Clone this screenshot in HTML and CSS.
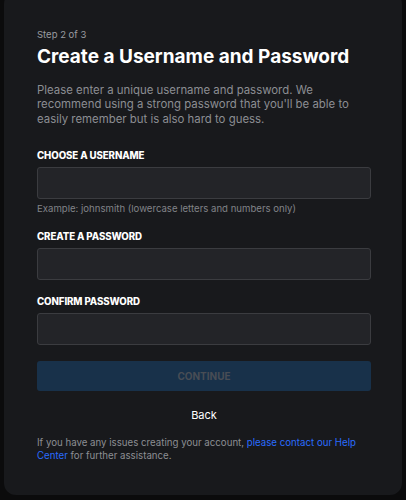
FILE: index.html
```html
<!DOCTYPE html>
<html>
<head>
<meta charset="utf-8">
<link rel="stylesheet" href="styles.css">
</head>
<body>
<div class="card">
  <div class="step">Step 2 of 3</div>
  <h1 class="title">Create a Username and Password</h1>
  <p class="intro">Please enter a unique username and password. We recommend using a strong password that you'll be able to easily remember but is also hard to guess.</p>
  <div class="field first">
    <label class="label">CHOOSE A USERNAME</label>
    <div class="input"></div>
    <div class="hint">Example: johnsmith (lowercase letters and numbers only)</div>
  </div>
  <div class="field">
    <label class="label">CREATE A PASSWORD</label>
    <div class="input"></div>
  </div>
  <div class="field">
    <label class="label">CONFIRM PASSWORD</label>
    <div class="input"></div>
  </div>
  <div class="button">CONTINUE</div>
  <div class="back">Back</div>
  <p class="footer">If you have any issues creating your account, <span class="link">please contact our Help Center</span> for further assistance.</p>
</div>
</body>
</html>
```
FILE: styles.css
```css
html, body {
  margin: 0;
  padding: 0;
  background: #0b0b0c;
}
body {
  font-family: Inter, "Noto Sans", sans-serif;
  padding: 0 4px 5px 4px;
}
.card {
  background: #18191c;
  border-radius: 12px;
  margin-top: -8px;
  padding: 36px 31px 30px 33px;
  height: 503px;
  box-sizing: border-box;
}
.step {
  color: #9a9ca0;
  font-size: 9.5px;
  line-height: 14px;
}
.title {
  color: #ffffff;
  font-size: 19px;
  font-weight: 700;
  line-height: 26px;
  margin: 2px 0 0 0;
}
.intro {
  color: #8c8e93;
  font-size: 11.4px;
  line-height: 14.5px;
  margin: 12.75px 0 0 0;
  max-width: 318px;
}
.field {
  margin-top: 16px;
}
.field.first {
  margin-top: 23.75px;
}
.label {
  display: block;
  color: #ffffff;
  font-size: 9.7px;
  font-weight: 800;
  line-height: 12px;
  letter-spacing: -0.1px;
}
.input {
  margin-top: 5px;
  height: 32px;
  box-sizing: border-box;
  background: #232428;
  border: 1px solid #3b3c40;
  border-radius: 3px;
}
.hint {
  color: #818388;
  font-size: 9.6px;
  line-height: 12px;
  margin-top: 4px;
}
.button {
  margin-top: 16px;
  height: 30px;
  background: #18314a;
  border-radius: 3px;
  color: #484d55;
  font-size: 10px;
  font-weight: 700;
  display: flex;
  align-items: center;
  justify-content: center;
}
.back {
  margin-top: 17px;
  color: #ffffff;
  font-size: 11px;
  text-align: center;
  line-height: 14px;
}
.footer {
  color: #8c8e93;
  font-size: 9.7px;
  line-height: 12.6px;
  margin: 15.4px 0 0 0;
}
.link {
  color: #2a6cff;
}
```
